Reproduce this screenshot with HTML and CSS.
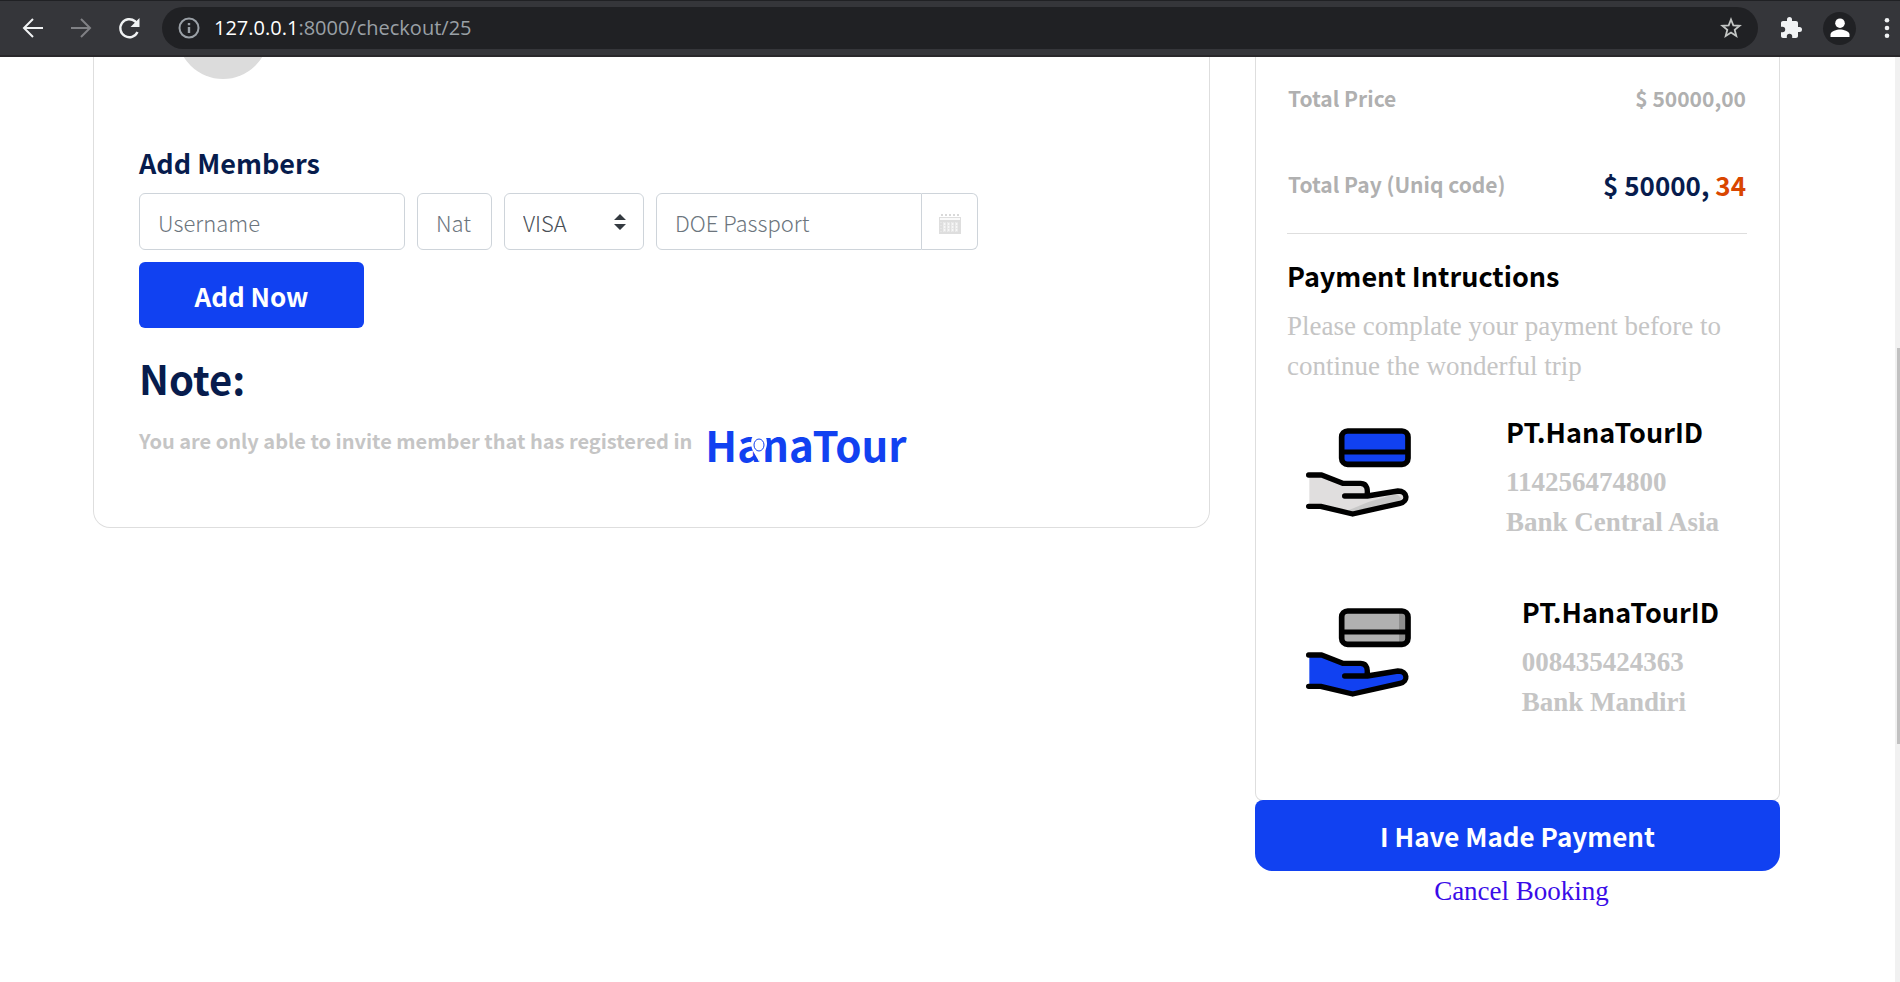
FILE: index.html
```html
<!DOCTYPE html>
<html lang="en">
<head>
<meta charset="utf-8">
<meta name="viewport" content="width=device-width, initial-scale=1">
<title>Checkout</title>
<link rel="stylesheet" href="styles.css">
</head>
<body>
<header class="browser-bar">
  <nav class="browser-nav" aria-label="Browser">
    <button class="bar-btn" type="button" aria-label="Back"><svg width="24" height="24" viewBox="0 0 24 24" fill="none" stroke="#f1f3f4" stroke-width="2"><path d="M22 12H3M12 3l-9 9 9 9"/></svg></button>
    <button class="bar-btn" type="button" aria-label="Forward"><svg width="24" height="24" viewBox="0 0 24 24" fill="none" stroke="#808185" stroke-width="2"><path d="M2 12h19M12 3l9 9-9 9"/></svg></button>
    <button class="bar-btn" type="button" aria-label="Reload"><svg width="24" height="24" viewBox="0 0 24 24"><path d="M20.500 16A9 9 0 1 1 18 5.200L20 7.500" fill="none" stroke="#f1f3f4" stroke-width="2.400"/><path d="M22.500 2v9h-9z" fill="#f1f3f4"/></svg></button>
  </nav>
  <div class="address">
    <svg width="22" height="22" viewBox="0 0 22 22" fill="none" stroke="#9aa0a6" stroke-width="2"><circle cx="11" cy="11" r="9.500"/><path d="M11 10v6M11 6v2.200" stroke-width="2.400"/></svg>
    <span class="url"><span class="url-host">127.0.0.1</span>:8000/checkout/25</span>
    <button class="star" type="button" aria-label="Bookmark"><svg width="22" height="22" viewBox="0 0 22 22" fill="none" stroke="#c4c7c5" stroke-width="1.800"><path d="M11 2.500l2.300 5.900 6.300.4-4.900 4 1.600 6.200-5.300-3.500L5.700 19l1.600-6.200-4.900-4 6.300-.4z"/></svg></button>
  </div>
  <div class="browser-tools">
    <button class="bar-btn" type="button" aria-label="Extensions"><svg width="24" height="24" viewBox="0 0 24 24" fill="#f1f3f4"><path d="M20.500 11H19V7c0-1.100-.9-2-2-2h-4V3.500a2.500 2.500 0 0 0-5 0V5H4c-1.100 0-2 .9-2 2v3.800h1.500a2.700 2.700 0 0 1 0 5.400H2V20c0 1.100.9 2 2 2h3.800v-1.500a2.700 2.700 0 0 1 5.400 0V22H17c1.100 0 2-.9 2-2v-4h1.500a2.500 2.500 0 0 0 0-5z"/></svg></button>
    <button class="profile" type="button" aria-label="Profile"><svg width="20" height="20" viewBox="0 0 20 20" fill="#fff"><circle cx="10" cy="5.200" r="4.800"/><path d="M0.500 19v-2.500C.5 13 7 11.500 10 11.500s9.500 1.500 9.500 5V19z"/></svg></button>
    <button class="bar-btn" type="button" aria-label="Menu"><svg width="6" height="20" viewBox="0 0 6 20" fill="#f1f3f4"><circle cx="3" cy="2.300" r="2.300"/><circle cx="3" cy="10" r="2.300"/><circle cx="3" cy="17.700" r="2.300"/></svg></button>
  </div>
</header>

<div class="viewport">
  <main class="page">
    <section class="card members">
      <div class="avatar-clip"><div class="avatar"></div></div>
      <h2 class="heading navy">Add Members</h2>
      <form class="member-form">
        <input class="field wide" type="text" placeholder="Username" aria-label="Username">
        <input class="field nat" type="text" placeholder="Nat" aria-label="Nationality">
        <div class="select-wrap">
          <select class="field select" aria-label="VISA"><option>VISA</option></select>
          <svg class="arrows" width="12" height="16" viewBox="0 0 12 16" fill="#343a40"><path d="M6 0l6 6H0zM6 16l6-6H0z"/></svg>
        </div>
        <div class="date-group">
          <input class="date-input" type="text" placeholder="DOE Passport" aria-label="DOE Passport">
          <button class="date-btn" type="button" aria-label="Open calendar"><svg width="22" height="20" viewBox="0 0 22 20"><path d="M0 3h22v17H0z" fill="#dedede"/><path d="M1 4h20v2H1z" fill="#fafafa"/><path d="M2 1h2M6 1h2M10 1h2M14 1h2M18 1h2" stroke="#d9d9d9" stroke-width="2"/><path d="M5.500 8v10M9.500 8v10M13.500 8v10M17.500 8v10" stroke="#f7f7f7" stroke-width="2"/><path d="M1 8.500h20M1 11.500h20M1 14.500h20M1 17.500h20" stroke="#e6e6e6" stroke-width="1" stroke-dasharray="2 2"/></svg></button>
        </div>
        <button class="primary add-btn" type="submit">Add Now</button>
      </form>
      <h1 class="note-title">Note:</h1>
      <div class="note">
        <p class="note-text">You are only able to invite member that has registered in</p>
        <div class="logo">HanaTour<svg class="pin" width="16" height="32" viewBox="0 0 16 32"><path d="M8 31C6 25 0 20 0 12a8 11 0 0 1 16 0c0 8-6 13-8 19z" fill="#fff"/><ellipse cx="8" cy="14" rx="5" ry="6" fill="#fff" stroke="#1141f1" stroke-width="1"/></svg></div>
      </div>
    </section>

    <aside class="side">
      <section class="card summary">
        <dl class="totals">
          <div class="row"><dt>Total Price</dt><dd>$ 50000,00</dd></div>
          <div class="row"><dt>Total Pay (Uniq code)</dt><dd class="total">$ 50000, <span class="code">34</span></dd></div>
        </dl>
        <h2 class="heading">Payment Intructions</h2>
        <p class="hint">Please complate your payment before to continue the wonderful trip</p>
        <div class="bank">
          <svg class="bank-icon" width="107" height="91" viewBox="75 80 321 273" stroke-linecap="round" stroke-linejoin="round"><rect x="185" y="92" width="199" height="100" rx="18" fill="#1141f1" stroke="#000" stroke-width="17"/><path d="M188 155h193" stroke="#000" stroke-width="15"/><path d="M88 225h36l64 25h51c27 0 25 26 20 38l95-16c27 0 29 31 6 37l-141 32-95-22H88z" fill="#e0dede"/><path d="M205 330l60-25 85-25 15 15-15 10-130 32z" fill="#c8c8c8"/><path d="M86 224h39l63 25h54c22 0 21 24 19 36M194 287h68l92-15c29 0 32 32 6 37l-142 32-96-23H86" fill="none" stroke="#000" stroke-width="16"/></svg>
          <div><h3 class="heading">PT.HanaTourID</h3><p class="bank-info">114256474800<br>Bank Central Asia</p></div>
        </div>
        <div class="bank">
          <svg class="bank-icon" width="107" height="91" viewBox="75 80 321 273" stroke-linecap="round" stroke-linejoin="round"><rect x="185" y="92" width="199" height="100" rx="18" fill="#b0b0b0"/><path d="M357 95h18v94h-18z" fill="#8f8f8f"/><rect x="185" y="92" width="199" height="100" rx="18" fill="none" stroke="#000" stroke-width="17"/><path d="M188 155h193" stroke="#000" stroke-width="15"/><path d="M88 225h36l64 25h51c27 0 25 26 20 38l95-16c27 0 29 31 6 37l-141 32-95-22H88z" fill="#1141f1"/><path d="M86 224h39l63 25h54c22 0 21 24 19 36M194 287h68l92-15c29 0 32 32 6 37l-142 32-96-23H86" fill="none" stroke="#000" stroke-width="16"/></svg>
          <div><h3 class="heading">PT.HanaTourID</h3><p class="bank-info">008435424363<br>Bank Mandiri</p></div>
        </div>
      </section>
      <button class="primary pay-btn" type="button">I Have Made Payment</button>
      <a class="cancel" href="#">Cancel Booking</a>
    </aside>
  </main>
  <div class="scroll-track"><div class="scroll-thumb"></div></div>
</div>
</body>
</html>
```

FILE: styles.css
```css
* { box-sizing: border-box; }

body {
  margin: 0;
  height: 100vh;
  display: flex;
  flex-direction: column;
  overflow: hidden;
  background: #fff;
  color: #000;
  font-family: "Noto Sans CJK JP", "Noto Sans", sans-serif;
}

h1, h2, h3, p, dl, dd { margin: 0; }
button { font-family: inherit; cursor: pointer; }

.browser-bar {
  flex: none;
  display: flex;
  align-items: center;
  height: 57px;
  padding: 0 10px 0 21px;
  background: #35363a;
  border-top: 1px solid #202124;
  border-bottom: 2px solid #29282b;
}
.browser-nav { display: flex; gap: 24px; margin-right: 21px; }
.bar-btn, .star {
  display: flex;
  padding: 0;
  border: 0;
  background: none;
}
.address {
  flex: 1;
  display: flex;
  align-items: center;
  height: 42px;
  padding: 0 16px;
  border-radius: 21px;
  background: #202124;
}
.url {
  flex: 1;
  margin-left: 14px;
  color: #9aa0a6;
  font: 20px/42px "Open Sans", sans-serif;
}
.url-host { color: #fff; }
.browser-tools { display: flex; align-items: center; gap: 20px; margin-left: 21px; }
.browser-tools .bar-btn:last-child { margin-left: 8px; }
.profile {
  display: grid;
  place-items: center;
  width: 33px;
  height: 33px;
  padding: 0;
  border: 0;
  border-radius: 50%;
  background: #202124;
}

.viewport { flex: 1; display: flex; min-height: 0; }
.page {
  flex: 1;
  display: grid;
  grid-template-columns: 1117fr 525fr;
  gap: 45px;
  align-items: start;
  padding: 0 115px 0 93px;
}
.scroll-track { width: 5px; padding: 291px 0 0 2px; background: #f1f1f1; }
.scroll-thumb { height: 396px; background: #c1c1c1; }

.card { border: 1px solid #dedede; border-top: 0; }
.members { padding: 0 45px 48px; border-radius: 0 0 17px 17px; }
.avatar-clip {
  display: flex;
  align-items: flex-end;
  height: 22px;
  margin-left: 38px;
  overflow: hidden;
}
.avatar { flex: none; width: 92px; height: 92px; border-radius: 50%; background: #dcdcdc; }

.heading { font-size: 27px; line-height: 32px; font-weight: 700; }
.navy { color: #071c4d; }
.members .heading { margin-top: 68px; }

.member-form { display: flex; flex-wrap: wrap; gap: 12px; margin-top: 14px; }
.field, .date-input {
  height: 57px;
  padding: 0 18px;
  border: 1px solid #ced4da;
  border-radius: 6px;
  background: #fff;
  color: #495057;
  font-family: inherit;
  font-size: 22px;
  font-weight: 300;
}
.field::placeholder, .date-input::placeholder { color: #6c757d; opacity: 1; }
.wide { width: 266px; }
.nat { width: 75px; }
.select-wrap { position: relative; width: 140px; }
.select { width: 100%; appearance: none; }
.arrows { position: absolute; right: 18px; top: 21px; pointer-events: none; }
.date-group { display: flex; width: 322px; }
.date-input { flex: 1; min-width: 0; border-radius: 6px 0 0 6px; }
.date-btn {
  display: grid;
  place-items: center;
  width: 56px;
  padding: 4px 0 0;
  border: 1px solid #ced4da;
  border-left: 0;
  border-radius: 0 6px 6px 0;
  background: #fff;
}

.primary {
  border: 0;
  background: #1141f1;
  color: #fff;
  font-size: 26px;
  font-weight: 700;
}
.add-btn { width: 225px; height: 66px; margin-right: auto; border-radius: 6px; }

.note-title { margin-top: 26px; color: #071c4d; font-size: 40px; line-height: 48px; font-weight: 700; }
.note { display: flex; gap: 13px; height: 77px; }
.note-text { margin-top: 23px; color: #c5c5c5; font-size: 20px; line-height: 32px; font-weight: 700; }
.logo { position: relative; margin-top: 14px; color: #1141f1; font-size: 42px; line-height: 56px; font-weight: 700; }
.pin { position: absolute; left: 46px; top: 15px; }

.side { display: flex; flex-direction: column; }
.summary { padding: 25px 32px 84px 31px; border-radius: 0 0 8px 8px; }
.totals { margin-bottom: 26px; padding-bottom: 33px; border-bottom: 1px solid #dedede; }
.row { display: flex; justify-content: space-between; align-items: center; height: 32px; padding: 0 1px; color: #b0b0b0; font-size: 21px; font-weight: 700; }
.row + .row { margin-top: 54px; }
.total { color: #071c4d; font-size: 26px; }
.code { color: #d94600; }
.hint, .bank-info, .cancel { font-family: "Liberation Serif", serif; font-size: 27px; line-height: 40px; }
.hint { margin-top: 14px; color: #c5c5c5; }
.bank { display: flex; justify-content: space-between; align-items: flex-start; height: 120px; margin: 30px 28px 0 18px; }
.bank + .bank { margin-top: 60px; }
.bank-icon { margin-top: 11px; }
.bank-info { margin-top: 14px; color: #c5c5c5; font-weight: 700; }
.pay-btn { height: 71px; margin-top: -1px; border-radius: 8px 8px 18px 18px; }
.cancel { align-self: center; padding-left: 8px; color: #3a0ce8; text-decoration: none; }
```
